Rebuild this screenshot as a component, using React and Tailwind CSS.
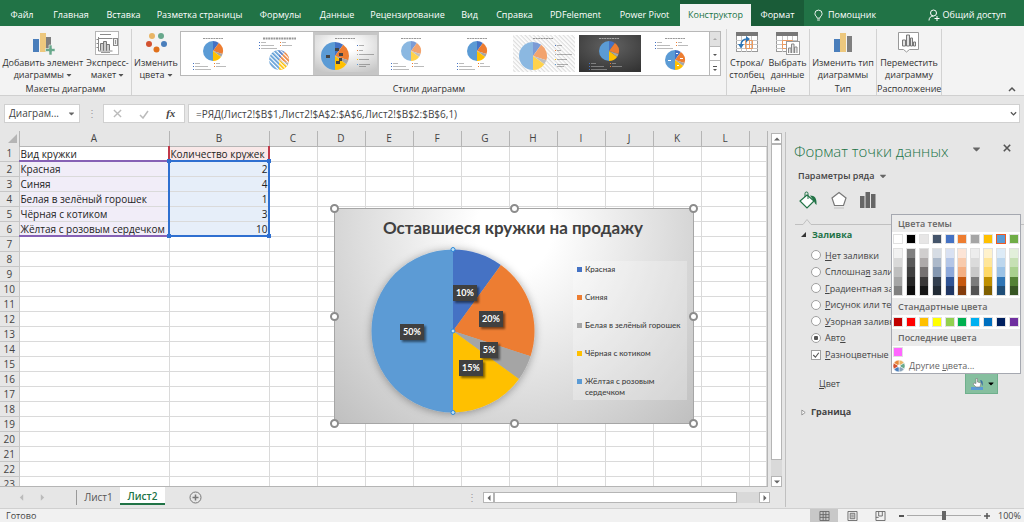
import React, { useState } from 'react';
import { FaCaretDown } from 'react-icons/fa';

const MENU = [
  { label: 'Файл', width: 'w-[44px]' },
  { label: 'Главная', width: 'w-[54px]' },
  { label: 'Вставка', width: 'w-[51px]' },
  { label: 'Разметка страницы', width: 'w-[101px]' },
  { label: 'Формулы', width: 'w-[61px]' },
  { label: 'Данные', width: 'w-[52px]' },
  { label: 'Рецензирование', width: 'w-[89px]' },
  { label: 'Вид', width: 'w-[35px]' },
  { label: 'Справка', width: 'w-[55px]' },
  { label: 'PDFelement', width: 'w-[67px]' },
  { label: 'Power Pivot', width: 'w-[71px]' },
];

const COLUMNS = ['A', 'B', 'C', 'D', 'E', 'F', 'G', 'H', 'I', 'J', 'K', 'L', ''];

const DATA = [
  { name: 'Красная', count: 2, color: '#4472c4' },
  { name: 'Синяя', count: 4, color: '#ed7d31' },
  { name: 'Белая в зелёный горошек', count: 1, color: '#a5a5a5' },
  { name: 'Чёрная с котиком', count: 3, color: '#ffc000' },
  { name: 'Жёлтая с розовым сердечком', count: 10, color: '#5b9bd5' },
];

const THEME = [
  ['#ffffff', '#f2f2f2', '#d9d9d9', '#bfbfbf', '#a6a6a6', '#808080'],
  ['#000000', '#7f7f7f', '#595959', '#404040', '#262626', '#0d0d0d'],
  ['#e7e6e6', '#d0cece', '#aeaaaa', '#757171', '#3a3838', '#161616'],
  ['#44546a', '#d6dce4', '#acb9ca', '#8497b0', '#333f4f', '#222b35'],
  ['#4472c4', '#d9e1f2', '#b4c6e7', '#8ea9db', '#305496', '#203764'],
  ['#ed7d31', '#fce4d6', '#f8cbad', '#f4b084', '#c65911', '#833c0c'],
  ['#a5a5a5', '#ededed', '#dbdbdb', '#c9c9c9', '#7b7b7b', '#525252'],
  ['#ffc000', '#fff2cc', '#ffe699', '#ffd966', '#bf8f00', '#806000'],
  ['#5b9bd5', '#ddebf7', '#bdd7ee', '#9bc2e6', '#2f75b5', '#1f4e78'],
  ['#70ad47', '#e2efda', '#c6e0b4', '#a9d08e', '#548235', '#375623'],
];

const STANDARD = [
  '#c00000', '#ff0000', '#ffc000', '#ffff00', '#92d050',
  '#00b050', '#00b0f0', '#0070c0', '#002060', '#7030a0',
];

const FILLS = [
  ['Н', 'ет заливки', ''],
  ['', 'Сплошна', 'я', ' заливка'],
  ['Г', 'радиентная заливка', ''],
  ['Р', 'исунок или текстура', ''],
  ['У', 'зорная заливка', ''],
  ['', 'Авт', 'о', ''],
];

// Сектор круга по долям от начала окружности
const slicePath = (cx, cy, r, from, to) => {
  const a = from * Math.PI * 2;
  const b = to * Math.PI * 2;
  const large = to - from > 0.5 ? 1 : 0;
  return `M${cx} ${cy}L${cx + r * Math.sin(a)} ${cy - r * Math.cos(a)}A${r} ${r} 0 ${large} 1 ${cx + r * Math.sin(b)} ${cy - r * Math.cos(b)}Z`;
};

const Pie = ({ cx, cy, r }) => {
  const total = DATA.reduce((sum, d) => sum + d.count, 0);
  let start = 0;
  return DATA.map((d) => {
    const from = start;
    start += d.count / total;
    return <path key={d.name} d={slicePath(cx, cy, r, from, start)} fill={d.color} />;
  });
};

// Подписи-полоски на миниатюрах
const TinyLegend = ({ y, color }) => (
  <g>
    {[0, 3, 6].map((dy, i) => (
      <g key={dy}>
        <rect x="10" y={y + dy} width="1" height="1" fill="#4472c4" />
        <rect x="12" y={y + dy} width={[5, 13, 16][i]} height="1" fill={color} opacity="0.4" />
        {i < 2 && <rect x="31" y={y + dy} width="1" height="1" fill="#ed7d31" />}
        {i < 2 && <rect x="33" y={y + dy} width={[4, 10][i]} height="1" fill={color} opacity="0.4" />}
      </g>
    ))}
  </g>
);

const SideLegend = () => (
  <g>
    {[10, 15, 19, 24, 29].map((y, i) => (
      <g key={y}>
        <rect x="42" y={y} width="1" height="1" fill={DATA[i].color} />
        <rect x="44" y={y} width={[5, 4, 15, 10, 11][i]} height="1" fill="#444" opacity="0.4" />
      </g>
    ))}
    <rect x="44" y="31" width="7" height="1" fill="#444" opacity="0.4" />
  </g>
);

const StyleThumb = ({ kind }) => {
  const dark = kind === 6;
  const side = kind === 2 || kind === 5;
  const top = kind === 1 || kind === 7;
  const ink = dark ? '#ddd' : '#555';
  const cx = side ? 20 : 30;
  const cy = side ? 21 : top ? 25 : 16;
  const r = side ? 14 : 10;
  return (
    <svg viewBox="0 0 62 37" className="h-[37px] w-[62px]" aria-hidden="true">
      <defs>
        <pattern id={`hatch${kind}`} width="3" height="3" patternUnits="userSpaceOnUse" patternTransform="rotate(45)">
          <rect width="3" height="1.3" fill={kind === 5 ? '#dedede' : '#ffffff'} />
        </pattern>
        <radialGradient id={`thumb${kind}`} cy="0.3" r="0.8">
          <stop offset="0.2" stopColor={dark ? '#595959' : '#ffffff'} />
          <stop offset="1" stopColor={dark ? '#333333' : '#c6c6c6'} />
        </radialGradient>
      </defs>
      <rect width="62" height="37" fill={kind === 2 ? 'url(#thumb2)' : dark ? 'url(#thumb6)' : '#fff'} />
      {kind === 5 && <rect width="62" height="37" fill="url(#hatch5)" />}
      <line x1={kind === 1 ? 14 : 20} y1="3.5" x2={kind === 1 ? 47 : 40} y2="3.5" stroke={ink} strokeWidth={kind === 1 ? 2 : 1} strokeDasharray="2 0.6" opacity="0.6" />
      {kind === 5 && <circle cx={cx} cy={cy} r={r} fill="#fff" />}
      <g opacity={kind === 3 || kind === 5 ? 0.7 : 1}>
        <Pie cx={cx} cy={cy} r={r} />
      </g>
      {kind === 1 && <circle cx={cx} cy={cy} r={r} fill="url(#hatch1)" />}
      {kind === 2 && (
        <g fill="#444">
          <rect x="11" y="20" width="4" height="3" />
          <rect x="20" y="13" width="4" height="3" />
          <rect x="24" y="18" width="4" height="3" />
          <rect x="24" y="23" width="3" height="3" />
          <rect x="21" y="26" width="4" height="3" />
        </g>
      )}
      {kind === 7 && (
        <g fill="#fff">
          <rect x="23" y="25" width="3" height="1" />
          <rect x="31" y="18" width="2" height="1" />
          <rect x="35" y="23" width="3" height="1" />
          <rect x="32" y="30" width="2" height="1" />
        </g>
      )}
      {side ? <SideLegend /> : <TinyLegend y={top ? 7 : 28} color={ink} />}
    </svg>
  );
};

const IconAddElement = () => (
  <svg viewBox="0 0 24 24" className="h-[24px] w-[24px]" aria-hidden="true">
    <rect x="2" y="8" width="6" height="13" fill="#4a7ebb" />
    <rect x="9" y="2" width="6" height="19" fill="#edc87e" />
    <rect x="15" y="6" width="5" height="12" fill="#7f7f7f" />
    <path d="M18 14h3v3.500h3v3h-3V24h-3v-3.500h-3.500v-3H18z" fill="#68a88c" stroke="#f3f3f3" strokeWidth="0.600" />
  </svg>
);

const IconLayout = () => (
  <svg viewBox="0 0 24 24" className="h-[24px] w-[24px]" aria-hidden="true">
    <rect x="0.5" y="0.5" width="23" height="23" fill="#fff" stroke="#b5b5b5" />
    <path d="M5 3.500h11" stroke="#8a8a8a" />
    <path d="M3.500 6v14h14M1.500 8.500h2M1.500 12.500h2M1.500 16.500h2M3.500 7.500h14" stroke="#888" fill="none" />
    <path d="M5.500 19.500v-7h3v7M8.500 19.500v-9h3v9M11.500 19.500v-6h3v6" fill="#ccc" stroke="#777" />
    <rect x="18.500" y="7.500" width="4" height="7" fill="#eee" stroke="#888" />
    <path d="M20.500 9v4M6 21.500h9" stroke="#999" />
  </svg>
);

const IconColors = () => (
  <svg viewBox="0 0 24 24" className="h-[24px] w-[24px]" aria-hidden="true">
    <circle cx="8" cy="5" r="3" fill="#e8b565" />
    <circle cx="17" cy="5" r="3" fill="#68a88c" />
    <circle cx="5" cy="13" r="3" fill="#d35230" />
    <circle cx="20" cy="13" r="3" fill="#4a7ebb" />
    <circle cx="12.500" cy="18.500" r="3" fill="#e0701a" />
  </svg>
);

const IconRowColumn = () => (
  <svg viewBox="0 0 24 24" className="h-[24px] w-[24px]" aria-hidden="true">
    <rect x="1.500" y="1.500" width="21" height="19" fill="#fff" stroke="#999" />
    <rect x="1" y="1" width="22" height="4" fill="#777" />
    <path d="M1 9.500h22M1 13.500h22M1 17.500h22M6.500 5v16M11.500 5v16M16.500 5v16" stroke="#c5c5c5" />
    <path d="M10.500 9.500h7v8h-7zM14.500 9v8M11 13.500h7" stroke="#ed9b5f" fill="none" />
    <path d="M6 14.500C5.500 10 9 8 12 8" stroke="#2e75b6" strokeWidth="1.600" fill="none" />
    <path d="M11 5l4 3-4 3.500zM3 13h6l-3 4.500z" fill="#2e75b6" />
  </svg>
);

const IconSelectData = () => (
  <svg viewBox="0 0 24 24" className="h-[24px] w-[24px]" aria-hidden="true">
    <rect x="0.500" y="1.500" width="21" height="19" fill="#fff" stroke="#999" />
    <rect x="0" y="1" width="22" height="4" fill="#777" />
    <path d="M0 9.500h21M0 13.500h21M0 17.500h21M6.500 5v16M11.500 5v16M16.500 5v16" stroke="#c5c5c5" />
    <path d="M6.500 9.500h10v8h-10zM11.500 9v8M7 13.500h10" stroke="#ed9b5f" fill="none" />
    <rect x="10.500" y="10.500" width="13" height="13" fill="#fff" stroke="#999" />
    <path d="M12.500 22v-5h2.500v5M15.500 22v-9h2.500v9M18.500 22v-6h2.500v6" stroke="#888" fill="#e5e5e5" />
  </svg>
);

const IconChartType = () => (
  <svg viewBox="0 0 24 24" className="h-[24px] w-[24px]" aria-hidden="true">
    <rect x="3" y="8" width="6" height="13" fill="#4a7ebb" />
    <rect x="9" y="2" width="6" height="19" fill="#edc87e" />
    <rect x="16" y="5" width="5" height="16" fill="#7f7f7f" />
  </svg>
);

const IconMoveChart = () => (
  <svg viewBox="0 0 24 24" className="h-[24px] w-[24px]" aria-hidden="true">
    <path d="M1.500 1.500h20v17h-9l-3 2.500-3-2.500h-5z" fill="#fff" stroke="#999" />
    <path d="M5.500 15v-6h3v6zM9.500 15v-11h3v11zM13.500 15v-8h2v8zM16.500 15v-4h2v4z" fill="#e3e3e3" stroke="#777" />
  </svg>
);

const RibbonButton = ({ icon, lines, arrow }) => (
  <button type="button" className="flex shrink-0 flex-col items-center whitespace-nowrap leading-[12px]">
    {icon}
    <span className="mt-[2px]">{lines[0]}</span>
    <span className="flex items-center gap-[2px]">
      {lines[1]}
      {arrow && <FaCaretDown className="h-[8px] w-[6px] text-[#555]" />}
    </span>
  </button>
);

const RibbonGroup = ({ title, width, children }) => (
  <section className={`flex shrink-0 flex-col justify-between border-r border-[#d2d2d2] pt-[2px] ${width}`}>
    <div className="flex justify-center">{children}</div>
    <h2 className="text-center leading-[12px]">{title}</h2>
  </section>
);

const TabBar = () => (
  <header className="flex h-[26px] shrink-0 bg-[#217346] text-[9px] text-white">
    <nav className="flex">
      {MENU.map((m) => (
        <button key={m.label} type="button" className={`shrink-0 whitespace-nowrap pt-[4px] text-center ${m.width}`}>
          {m.label}
        </button>
      ))}
      <div className="flex bg-[#1a5c38] pt-[4px]">
        <button type="button" className="w-[71px] bg-[#f3f3f3] text-[#217346]">Конструктор</button>
        <button type="button" className="w-[53px]">Формат</button>
      </div>
    </nav>
    <button type="button" className="ml-[10px] flex items-center gap-[5px] pt-[4px]">
      <svg viewBox="0 0 10 13" className="h-[13px] w-[9px]" fill="none" stroke="#fff" aria-hidden="true">
        <path d="M3.500 9.500C3.500 7.500 1 7 1 4.500a4 4 0 0 1 8 0C9 7 6.500 7.500 6.500 9.500zM3.500 11.500h3" />
      </svg>
      Помощник
    </button>
    <button type="button" className="ml-auto mr-[18px] flex items-center gap-[3px] whitespace-nowrap pt-[4px]">
      <svg viewBox="0 0 12 12" className="h-[12px] w-[12px]" fill="none" stroke="#fff" aria-hidden="true">
        <circle cx="5.500" cy="4" r="3" />
        <path d="M1 11.500c0-3 2-4.500 4.500-4.500M6.500 9.500h5M9 7v5" />
      </svg>
      Общий доступ
    </button>
  </header>
);

const Ribbon = () => (
  <div className="flex h-[70px] shrink-0 border-b border-[#d0d0d0] bg-[#f3f3f3] pt-[3px] text-[9px] text-[#333]">
    <RibbonGroup title="Макеты диаграмм" width="w-[132px]">
      <RibbonButton icon={<IconAddElement />} lines={['Добавить элемент', 'диаграммы']} arrow />
      <div className="ml-[3px]">
        <RibbonButton icon={<IconLayout />} lines={['Экспресс-', 'макет']} arrow />
      </div>
    </RibbonGroup>
    <RibbonGroup title="Стили диаграмм" width="w-[595px]">
      <RibbonButton icon={<IconColors />} lines={['Изменить', 'цвета']} arrow />
      <div className="ml-[2px] mr-[3px] flex h-[45px] border border-[#b8b8b8] bg-white">
        {[0, 1, 2, 3, 4, 5, 6, 7].map((kind) => (
          <button
            key={kind}
            type="button"
            aria-label={`Стиль ${kind + 1}`}
            className={`flex w-[66px] items-center justify-center ${kind === 2 ? 'bg-[#c6c6c6]' : ''}`}
          >
            <StyleThumb kind={kind} />
          </button>
        ))}
        <div className="flex w-[11px] flex-col divide-y divide-[#b8b8b8] border-l border-[#b8b8b8]">
          {['M3 7l2-2 2 2z', 'M3 6h4l-2 2z', 'M3 4h4v1h-4zM3 7h4l-2 2z'].map((d, i) => (
            <button key={d} type="button" aria-label="Прокрутка стилей" className={`flex flex-1 items-center justify-center ${i === 0 ? 'bg-[#e1e1e1] text-[#aaa]' : 'text-[#555]'}`}>
              <svg viewBox="0 0 10 12" className="h-[12px] w-[10px]" fill="currentColor"><path d={d} /></svg>
            </button>
          ))}
        </div>
      </div>
    </RibbonGroup>
    <RibbonGroup title="Данные" width="w-[83px]">
      <RibbonButton icon={<IconRowColumn />} lines={['Строка/', 'столбец']} />
      <div className="ml-[4px]">
        <RibbonButton icon={<IconSelectData />} lines={['Выбрать', 'данные']} />
      </div>
    </RibbonGroup>
    <RibbonGroup title="Тип" width="w-[67px]">
      <RibbonButton icon={<IconChartType />} lines={['Изменить тип', 'диаграммы']} />
    </RibbonGroup>
    <RibbonGroup title="Расположение" width="w-[65px]">
      <RibbonButton icon={<IconMoveChart />} lines={['Переместить', 'диаграмму']} />
    </RibbonGroup>
    <button type="button" aria-label="Свернуть ленту" className="ml-auto mr-[8px] self-end pb-[3px]">
      <svg viewBox="0 0 8 6" className="h-[6px] w-[8px]" fill="none" stroke="#555" strokeWidth="1.500"><path d="M1 5l3-3 3 3" /></svg>
    </button>
  </div>
);

const FormulaBar = () => (
  <div className="flex h-[35px] shrink-0 items-center bg-[#e6e6e6] pl-[4px] pr-[4px] text-[10px] text-[#444]">
    <div className="flex h-[19px] w-[76px] items-center justify-between border border-[#d0d0d0] bg-white pl-[4px] pr-[4px]">
      <span>Диаграм...</span>
      <FaCaretDown className="h-[9px] w-[7px] text-[#666]" />
    </div>
    <div className="w-[23px] text-center text-[#999]">⋮</div>
    <div className="flex h-[19px] w-[82px] items-center justify-around border border-[#d0d0d0] bg-white">
      <button type="button" aria-label="Отмена">
        <svg viewBox="0 0 10 10" className="h-[9px] w-[9px]" stroke="#bbb" strokeWidth="1.500"><path d="M1 1l8 8M9 1l-8 8" /></svg>
      </button>
      <button type="button" aria-label="Ввод">
        <svg viewBox="0 0 10 10" className="h-[10px] w-[10px]" fill="none" stroke="#bbb" strokeWidth="1.500"><path d="M1 6l3 3 5-7" /></svg>
      </button>
      <button type="button" className="font-['Liberation_Serif',serif] text-[11px] font-bold italic">fx</button>
    </div>
    <input
      aria-label="Строка формул"
      defaultValue="=РЯД(Лист2!$B$1,Лист2!$A$2:$A$6,Лист2!$B$2:$B$6,1)"
      className="ml-[3px] h-[19px] min-w-0 flex-1 border border-r-0 border-[#d0d0d0] bg-white pl-[7px]"
    />
    <button type="button" aria-label="Развернуть" className="flex h-[19px] w-[12px] items-center justify-center border border-l-0 border-[#d0d0d0] bg-white">
      <svg viewBox="0 0 8 6" className="h-[6px] w-[7px]" fill="none" stroke="#555" strokeWidth="1.500"><path d="M1 1l3 3 3-3" /></svg>
    </button>
  </div>
);

const Chart = () => {
  const labels = [
    ['10%', 131, 84], ['20%', 157, 110], ['5%', 155, 141], ['15%', 137, 159], ['50%', 78, 123],
  ];
  return (
    <figure className="absolute left-[334px] top-[77px] h-[216px] w-[360px] border border-[#a6a6a6] bg-[radial-gradient(ellipse_at_50%_10%,#ffffff_15%,#dedede_60%,#bfbfbf_100%)] font-[Lato,'Open_Sans',sans-serif]">
      <figcaption className="pr-[2px] pt-[6px] text-center text-[17px] font-bold leading-[25px] text-[#404040]">
        Оставшиеся кружки на продажу
      </figcaption>
      <div className="flex">
        <svg viewBox="24 31 190 184" className="ml-[23px] h-[184px] w-[190px]" role="img" aria-label="Круговая диаграмма">
          <defs>
            <filter id="soft" x="-20%" y="-20%" width="140%" height="140%">
              <feDropShadow dx="0" dy="1" stdDeviation="4" floodOpacity="0.35" />
            </filter>
            <filter id="label" x="-30%" y="-30%" width="180%" height="180%">
              <feDropShadow dx="2" dy="2" stdDeviation="1" floodOpacity="0.5" />
            </filter>
          </defs>
          <g filter="url(#soft)"><Pie cx={119} cy={122} r={81.5} /></g>
          {labels.map(([text, x, y]) => {
            const w = text.length === 2 ? 18 : 24;
            return (
              <g key={text}>
                <rect x={x - w / 2} y={y - 8} width={w} height="16" fill="#404040" filter="url(#label)" />
                <text x={x} y={y + 3} textAnchor="middle" fontSize="9" fontWeight="700" fill="#fff">{text}</text>
              </g>
            );
          })}
          {[40.5, 122, 203.5].map((y) => (
            <circle key={y} cx="119" cy={y} r="2" fill="#bfe0f5" stroke="#2b88d8" />
          ))}
        </svg>
        <ul className="ml-[25px] mt-[21px] h-[139px] w-[114px] bg-white/25 pl-[4px] text-[8px] font-medium text-[#404040]">
          {DATA.map((d) => (
            <li key={d.name} className="flex h-[28px] gap-[3px] pt-[3px] leading-[11px]">
              <span className="mt-[3px] h-[5px] w-[5px] shrink-0" style={{ backgroundColor: d.color }} />
              <span className={d.count === 10 ? 'w-[80px]' : 'whitespace-nowrap'}>{d.name}</span>
            </li>
          ))}
        </ul>
      </div>
      {[
        '-left-[5px] -top-[5px]', 'left-[175px] -top-[5px]', '-right-[5px] -top-[5px]',
        '-left-[5px] top-[103px]', '-right-[5px] top-[103px]',
        '-left-[5px] -bottom-[5px]', 'left-[175px] -bottom-[5px]', '-right-[5px] -bottom-[5px]',
      ].map((pos) => (
        <span key={pos} className={`absolute h-[9px] w-[9px] rounded-full border-2 border-[#8c8c8c] bg-white ${pos}`} />
      ))}
    </figure>
  );
};

const Sheet = () => (
  <div className="relative min-h-0 flex-1 overflow-hidden border-b border-r border-[#b5b5b5]">
    <table className="w-full table-fixed border-collapse bg-white text-[10px] leading-[14px] text-[#222]">
      <colgroup>
        <col className="w-[19px]" />
        <col className="w-[150px]" />
        <col className="w-[100px]" />
        {COLUMNS.slice(2, 12).map((c) => <col key={c} className="w-[48px]" />)}
        <col />
      </colgroup>
      <thead>
        <tr className="h-[15px] bg-[#e6e6e6] text-[#444]">
          <th className="p-0">
            <svg viewBox="0 0 10 10" className="ml-auto mr-[2px] h-[9px] w-[9px]" aria-hidden="true"><path d="M10 0v10H0z" fill="#b5b5b5" /></svg>
          </th>
          {COLUMNS.map((c) => (
            <th key={c} className="border-b border-l border-[#b5b5b5] p-0 font-normal">{c}</th>
          ))}
        </tr>
      </thead>
      <tbody>
        {Array.from({ length: 23 }, (_, i) => {
          const item = DATA[i - 1];
          return (
            <tr key={i} className="h-[15px]">
              <th className="border border-l-0 border-t-0 border-[#c6c6c6] bg-[#e6e6e6] p-0 font-normal text-[#444]">{i + 1}</th>
              {COLUMNS.map((c) => {
                let tint = '';
                let text = '';
                if (c === 'A') text = i === 0 ? 'Вид кружки' : item?.name;
                if (c === 'B') text = i === 0 ? 'Количество кружек' : item?.count;
                if (c === 'A' && item) tint = 'bg-[#f1edf8]';
                if (c === 'B' && item) tint = 'bg-[#e6eef9] text-right';
                if (c === 'B' && i === 0) tint = 'bg-[#f9e8e8]';
                return (
                  <td key={c} className={`whitespace-nowrap border-b border-r border-[#dadada] px-[1px] py-0 ${tint}`}>
                    {text}
                  </td>
                );
              })}
            </tr>
          );
        })}
      </tbody>
    </table>
    {/* Рамки диапазонов ряда */}
    <div className="pointer-events-none absolute left-[19px] top-[29px] h-[77px] w-[150px] border-y-2 border-[#8661b5]" />
    <div className="pointer-events-none absolute left-[168px] top-[15px] h-[14px] w-[102px] border-x-2 border-[#c0394a]" />
    <div className="pointer-events-none absolute left-[168px] top-[29px] h-[77px] w-[102px] border-2 border-[#2f6fd0]">
      {['-left-[3px] -top-[3px]', '-right-[3px] -top-[3px]', '-left-[3px] -bottom-[3px]', '-right-[3px] -bottom-[3px]'].map((pos) => (
        <span key={pos} className={`absolute h-[4px] w-[4px] bg-[#2f6fd0] ${pos}`} />
      ))}
    </div>
    <Chart />
  </div>
);

const ArrowButton = ({ d, label }) => (
  <button type="button" aria-label={label} className="flex h-[11px] w-[11px] shrink-0 items-center justify-center border border-[#b5b5b5] bg-white">
    <svg viewBox="0 0 8 8" className="h-[6px] w-[6px]" fill="#666"><path d={d} /></svg>
  </button>
);

const SheetTabs = () => (
  <div className="flex h-[21px] shrink-0 bg-[#e6e6e6] text-[10px] text-[#555]">
    <div className="flex w-[76px] items-center gap-[16px] pl-[19px]">
      <svg viewBox="0 0 6 8" className="h-[7px] w-[5px]" fill="#bbb" aria-hidden="true"><path d="M5 0v8L1 4z" /></svg>
      <svg viewBox="0 0 6 8" className="h-[7px] w-[5px]" fill="#bbb" aria-hidden="true"><path d="M1 0v8l4-4z" /></svg>
    </div>
    <button type="button" className="my-[3px] w-[44px] border-l border-[#999]">Лист1</button>
    <button type="button" className="mb-[3px] w-[45px] border-b-2 border-[#217346] bg-white pt-[2px] font-semibold text-[#217346]">Лист2</button>
    <button type="button" aria-label="Новый лист" className="ml-[24px]">
      <svg viewBox="0 0 13 13" className="h-[13px] w-[13px]" fill="none" stroke="#777">
        <circle cx="6.500" cy="6.500" r="5.500" />
        <path d="M3.500 6.500h6M6.500 3.500v6" strokeWidth="1.500" />
      </svg>
    </button>
    <div className="ml-auto flex w-[318px] items-center pr-[15px]">
      <span className="w-[16px] text-[#999]">⋮</span>
      <ArrowButton d="M6 0v8L2 4z" label="Влево" />
      <div className="flex h-[11px] flex-1 bg-[#d9d9d9] pr-[22px]">
        <div className="flex-1 border border-[#b5b5b5] bg-white" />
      </div>
      <ArrowButton d="M2 0v8l4-4z" label="Вправо" />
    </div>
  </div>
);

const Swatch = ({ color, selected }) => (
  <button
    type="button"
    aria-label={color}
    className={`h-[10px] w-[10px] border ${selected ? 'border-[#f05a22]' : 'border-[#e1e1e1]'}`}
    style={{ backgroundColor: color }}
  />
);

const ColorMenu = () => (
  <div className="absolute -right-[23px] bottom-[20px] z-10 flex w-[130px] flex-col border border-[#a5a8b0] bg-white text-[9px] text-[#666]">
    <h3 className="h-[17px] bg-[#ebebeb] pl-[6px] font-semibold leading-[17px]">Цвета темы</h3>
    <div className="flex justify-between px-[1px] py-[2px]">
      {THEME.map(([main]) => <Swatch key={main} color={main} selected={main === '#5b9bd5'} />)}
    </div>
    <div className="flex justify-between px-[1px] pb-[2px] pt-[2px]">
      {THEME.map(([main, ...shades]) => (
        <div key={main} className="flex h-[48px] w-[10px] flex-col border border-[#e1e1e1]">
          {shades.map((s) => (
            <button key={s} type="button" aria-label={s} className="flex-1" style={{ backgroundColor: s }} />
          ))}
        </div>
      ))}
    </div>
    <h3 className="h-[17px] bg-[#ebebeb] pl-[6px] font-semibold leading-[17px]">Стандартные цвета</h3>
    <div className="flex justify-between px-[1px] py-[2px]">
      {STANDARD.map((c) => <Swatch key={c} color={c} />)}
    </div>
    <h3 className="h-[17px] bg-[#ebebeb] pl-[6px] font-semibold leading-[17px]">Последние цвета</h3>
    <div className="flex px-[1px] py-[1px]"><Swatch color="#ff66ff" /></div>
    <button type="button" className="flex h-[15px] items-center gap-[4px] pl-[1px]">
      <svg viewBox="0 0 12 12" className="h-[12px] w-[12px]" aria-hidden="true">
        {['#e8b565', '#68a88c', '#8aa5bb', '#4a7ebb', '#d35230', '#e88a3c'].map((c, i) => (
          <path key={c} d={slicePath(6, 6, 6, i / 6, (i + 1) / 6)} fill={c} stroke="#fff" strokeWidth="0.500" />
        ))}
        <circle cx="6" cy="6" r="1.500" fill="#fff" />
      </svg>
      <span>Другие <u>ц</u>вета...</span>
    </button>
  </div>
);

const FormatPane = () => {
  const [fill, setFill] = useState(5);
  return (
    <aside className="my-[1px] w-[239px] shrink-0 border-l border-[#c0c0c0] text-[9px] text-[#444]">
      <div className="flex h-[38px] items-center pl-[8px] pr-[13px]">
        <h1 className="whitespace-nowrap text-[15px] font-light text-[#217346]">Формат точки данных</h1>
        <button type="button" aria-label="Параметры панели" className="ml-auto pb-[4px]"><FaCaretDown className="h-[12px] w-[9px] text-[#666]" /></button>
        <button type="button" aria-label="Закрыть" className="ml-[22px] pb-[6px]">
          <svg viewBox="0 0 10 10" className="h-[8px] w-[8px]" stroke="#555" strokeWidth="2"><path d="M1 1l8 8M9 1l-8 8" /></svg>
        </button>
      </div>
      <button type="button" className="flex h-[12px] items-center gap-[5px] pl-[12px] font-semibold">
        Параметры ряда <FaCaretDown className="h-[10px] w-[8px] text-[#666]" />
      </button>
      <div className="flex h-[36px] items-center gap-[12px] pl-[13px]">
        <svg viewBox="0 0 19 18" className="h-[18px] w-[19px]" fill="none" aria-hidden="true">
          <path d="M8 4l7 6-7 7-7-7z" fill="#fff" stroke="#217346" strokeWidth="1.200" />
          <path d="M6 6V2.500a1.500 1.500 0 0 1 3 0V8" stroke="#217346" />
          <path d="M11 4.500c5 0 7 3 6.500 9.500-1-1-2-2-2.500-4z" fill="#217346" />
        </svg>
        <svg viewBox="0 0 18 18" className="h-[18px] w-[18px]" aria-hidden="true">
          <path d="M9 1.500l7 5.500-2.500 7.500h-9L2 7z" fill="#fff" stroke="#777" strokeWidth="1.200" />
          <path d="M4 17h10" stroke="#ccc" strokeWidth="1.500" />
        </svg>
        <svg viewBox="0 0 16 18" className="h-[18px] w-[16px]" fill="#666" aria-hidden="true">
          <path d="M0 5h4.500v12H0zM5.500 1h4.500v16H5.500zM11 3h4.500v14h-4.500z" />
        </svg>
      </div>
      <svg viewBox="0 0 230 7" className="ml-[9px] h-[7px] w-[230px]" fill="none" stroke="#c0c0c0" aria-hidden="true">
        <path d="M0 6.500h8l4-5 4 5h214" />
      </svg>
      <h2 className="flex h-[22px] items-center gap-[6px] pb-[3px] pl-[15px] font-bold text-[#217346]">
        <svg viewBox="0 0 6 6" className="h-[5px] w-[5px]" aria-hidden="true"><path d="M6 0v6H0z" fill="#333" /></svg>
        Заливка
      </h2>
      <div className="flex h-[99px] flex-col pl-[25px]">
        {FILLS.map((parts, i) => (
          <label key={parts[1]} className="flex flex-1 items-center gap-[4px] whitespace-nowrap">
            <input
              type="radio"
              name="fill"
              checked={fill === i}
              onChange={() => setFill(i)}
              className="h-[10px] w-[10px] appearance-none rounded-full border border-[#a0a0a0] bg-white checked:bg-[radial-gradient(circle,#555_35%,#fff_45%)]"
            />
            <span><u>{parts[0]}</u>{parts[1]}<u>{parts[2]}</u>{parts[3]}</span>
          </label>
        ))}
      </div>
      <label className="flex h-[18px] items-center gap-[4px] whitespace-nowrap pl-[25px]">
        <span className="grid">
          <input type="checkbox" defaultChecked className="peer col-start-1 row-start-1 h-[10px] w-[10px] appearance-none border border-[#a0a0a0] bg-white" />
          <svg viewBox="0 0 9 9" className="col-start-1 row-start-1 hidden h-[10px] w-[10px] peer-checked:block" fill="none" stroke="#555"><path d="M2 4.500l2 2 3-4" /></svg>
        </span>
        <span><u>Р</u>азноцветные секторы</span>
      </label>
      <div className="mt-[9px] flex items-center justify-between pl-[33px] pr-[26px]">
        <span><u>Ц</u>вет</span>
        <div className="relative">
          <button type="button" aria-label="Цвет заливки" className="flex h-[21px] w-[33px] items-center justify-center gap-[4px] border border-[#6fb08c] bg-[#86bf9f]">
            <svg viewBox="0 0 14 14" className="h-[14px] w-[14px]" aria-hidden="true">
              <rect x="1" y="10" width="12" height="3" fill="#5b9bd5" />
              <path d="M10 3c3 0 3 3 2.500 6z" fill="#3a6ea5" />
              <path d="M6 1.500v5L4 6l-1 1 3 3h4l1-4-3.500-1V1.500z" fill="#fff" stroke="#777" strokeWidth="0.600" />
            </svg>
            <FaCaretDown className="h-[9px] w-[6px] text-black" />
          </button>
          <ColorMenu />
        </div>
      </div>
      <h2 className="mt-[8px] flex h-[20px] items-center gap-[5px] pl-[15px] font-bold">
        <svg viewBox="0 0 6 8" className="h-[7px] w-[5px]" fill="#fff" stroke="#888" aria-hidden="true"><path d="M1 1v6l4-3z" /></svg>
        Граница
      </h2>
    </aside>
  );
};

const StatusBar = () => (
  <footer className="flex h-[14px] shrink-0 items-center border-t border-[#d0d0d0] bg-[#f1f1f1] text-[9px] text-[#444]">
    <span className="pl-[6px]">Готово</span>
    <div className="ml-auto flex h-full items-center">
      <button type="button" aria-label="Обычный" className="flex h-full w-[28px] items-center justify-center bg-[#c8c8c8]">
        <svg viewBox="0 0 11 11" className="h-[10px] w-[11px]" fill="none" stroke="#666"><path d="M.5.5h10v10H.5zM4 .5v10M7 .5v10M.5 4h10M.5 7h10" /></svg>
      </button>
      <button type="button" aria-label="Разметка страницы" className="flex w-[28px] justify-center">
        <svg viewBox="0 0 11 11" className="h-[10px] w-[11px]" fill="none" stroke="#666"><path d="M.5.5h10v10H.5zM3 2.500h5v6H3zM4 4.500h3M4 6.500h3" /></svg>
      </button>
      <button type="button" aria-label="Страничный" className="flex w-[29px] justify-center">
        <svg viewBox="0 0 11 11" className="h-[10px] w-[11px]" fill="none" stroke="#666"><path d="M.5.5h10v10H.5zM3.500 .5v5h4v-5M.5 7h3" /></svg>
      </button>
      <button type="button" aria-label="Уменьшить" className="flex w-[12px] justify-center"><span className="h-[2px] w-[5px] bg-[#555]" /></button>
      <input
        type="range"
        aria-label="Масштаб"
        defaultValue="50"
        className="h-[9px] w-[74px] appearance-none bg-[linear-gradient(#aaa,#aaa)] bg-[length:100%_1px] bg-center bg-no-repeat [&::-webkit-slider-thumb]:h-[9px] [&::-webkit-slider-thumb]:w-[4px] [&::-webkit-slider-thumb]:appearance-none [&::-webkit-slider-thumb]:bg-[#666]"
      />
      <button type="button" aria-label="Увеличить" className="flex w-[12px] justify-center">
        <svg viewBox="0 0 6 6" className="h-[6px] w-[6px]" stroke="#555" strokeWidth="1.500"><path d="M0 3h6M3 0v6" /></svg>
      </button>
      <span className="w-[31px] pl-[5px]">100%</span>
    </div>
  </footer>
);

export default function App() {
  return (
    <div className="flex h-screen flex-col overflow-hidden bg-[#e6e6e6] font-['Open_Sans','Noto_Sans',sans-serif]">
      <TabBar />
      <Ribbon />
      <FormulaBar />
      <main className="flex min-h-0 flex-1">
        <div className="flex min-w-0 flex-1 flex-col">
          <div className="flex min-h-0 flex-1">
            <Sheet />
            <div className="ml-[3px] mr-[3px] flex w-[11px] flex-col pt-[2px]">
              <ArrowButton d="M0 6h8L4 2z" label="Вверх" />
              <div className="flex flex-1 flex-col bg-[#d9d9d9] pb-[16px]">
                <div className="flex-1 border border-[#b5b5b5] bg-white" />
              </div>
              <ArrowButton d="M0 2h8L4 6z" label="Вниз" />
            </div>
          </div>
          <SheetTabs />
        </div>
        <FormatPane />
      </main>
      <StatusBar />
    </div>
  );
}
